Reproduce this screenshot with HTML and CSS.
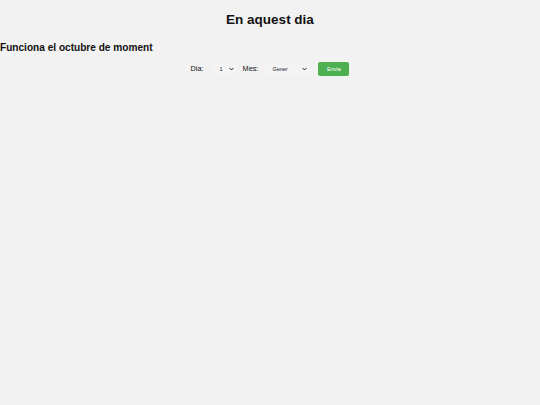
FILE: index.html
```html
<!DOCTYPE html>
<html lang="ca">
<head>
<meta charset="utf-8">
<title>En aquest dia</title>
<link rel="stylesheet" href="styles.css">
</head>
<body>
<h1 class="title">En aquest dia</h1>
<h2 class="subtitle">Funciona el octubre de moment</h2>
<form class="form">
  <label class="label" for="dia">Dia:</label>
  <span class="select-wrap select-day">
    <select id="dia" class="select">
      <option>1</option>
    </select>
    <svg class="chev" viewBox="0 0 8 5" width="5" height="4"><path d="M1 1 L4 4 L7 1" fill="none" stroke="#222" stroke-width="1.6"/></svg>
  </span>
  <label class="label label-mes" for="mes">Mes:</label>
  <span class="select-wrap select-month">
    <select id="mes" class="select">
      <option>Gener</option>
    </select>
    <svg class="chev" viewBox="0 0 8 5" width="5" height="4"><path d="M1 1 L4 4 L7 1" fill="none" stroke="#222" stroke-width="1.6"/></svg>
  </span>
  <button type="button" class="button">Envia</button>
</form>
</body>
</html>
```

FILE: styles.css
```css
html, body {
  margin: 0;
  padding: 0;
  background: #f2f2f2;
  font-family: "Liberation Sans", Arial, Helvetica, sans-serif;
  color: #111;
}

.title {
  margin: 0;
  padding-top: 11px;
  font-size: 13.5px;
  line-height: 18px;
  font-weight: bold;
  text-align: center;
}

.subtitle {
  margin: 11px 0 0 0;
  font-size: 10.1px;
  line-height: 15px;
  font-weight: bold;
}

.form {
  margin-top: 7px;
  display: flex;
  justify-content: center;
  align-items: center;
  height: 14px;
}

.label {
  font-size: 7.3px;
  line-height: 14px;
  color: #111;
}

.label-mes {
  margin-left: 5px;
}

.select-wrap {
  position: relative;
  display: inline-flex;
  height: 14px;
}

.select-day {
  margin-left: 8px;
  width: 26px;
}

.select-month {
  margin-left: 6px;
  width: 47px;
}

.select {
  -webkit-appearance: none;
  appearance: none;
  width: 100%;
  height: 14px;
  margin: 0;
  border: none;
  border-radius: 2px;
  background: #f4f4f4;
  font-family: "Liberation Sans", Arial, sans-serif;
  font-size: 5.5px;
  color: #222;
  padding: 0 0 0 8px;
  outline: none;
}

.chev {
  position: absolute;
  right: 4px;
  top: 5px;
  pointer-events: none;
}

.button {
  margin-left: 7px;
  width: 31px;
  height: 14px;
  border: none;
  border-radius: 2px;
  background: #4caf50;
  color: #fff;
  font-family: "Liberation Sans", Arial, sans-serif;
  font-size: 5.5px;
  font-weight: normal;
  padding: 0;
}
```
